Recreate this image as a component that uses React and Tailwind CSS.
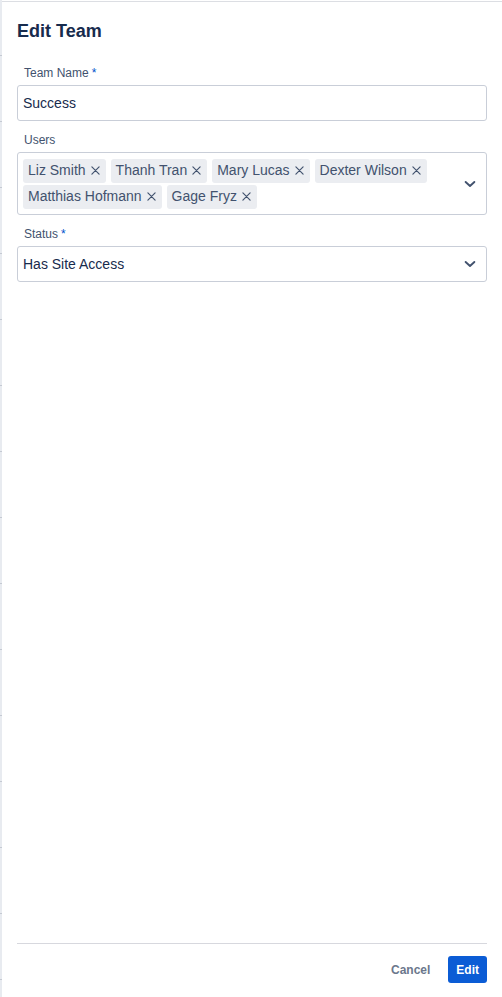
import React from 'react';

const users = ['Liz Smith', 'Thanh Tran', 'Mary Lucas', 'Dexter Wilson', 'Matthias Hofmann', 'Gage Fryz'];

function Chevron() {
  return (
    <svg width="14" height="14" viewBox="0 0 24 24" fill="none" className="shrink-0">
      <path d="M4.5 8.5 12 15.5l7.5-7" stroke="#42526e" strokeWidth="3.2" strokeLinecap="round" strokeLinejoin="round" />
    </svg>
  );
}

function Cross() {
  return (
    <svg width="9" height="9" viewBox="0 0 10 10" fill="none" className="shrink-0">
      <path d="M1 1l8 8M9 1 1 9" stroke="#42526e" strokeWidth="1.3" strokeLinecap="round" />
    </svg>
  );
}

function Label({ children, required }) {
  return (
    <div className="text-[12px] leading-4 text-[#42526e] pl-[7px]">
      {children}
      {required && <span className="text-[#0052cc] ml-[3px]">*</span>}
    </div>
  );
}

export default function App() {
  return (
    <div className="flex w-[502px] h-[997px] bg-white overflow-hidden" style={{ fontFamily: '"Liberation Sans", Arial, sans-serif' }}>
      {/* Strip of the page underneath the drawer */}
      <div className="w-[2px] shrink-0 bg-[#e8ebf0] flex flex-col">
        <div className="h-[55px] shrink-0" />
        {Array.from({ length: 15 }).map((_, i) => (
          <div key={i} className="h-[66px] shrink-0 border-t border-[#c5cad3]" />
        ))}
      </div>

      <div className="flex-1 flex flex-col mt-px border-t border-[#dcdee3]">
        <div className="flex-1 px-[15px]">
          <h2 className="pt-[17px] text-[18px] leading-6 font-bold text-[#172b4d]">Edit Team</h2>

          <div className="mt-[22px]">
            <Label required>Team Name</Label>
            <div className="mt-[4px] h-[36px] border border-[#c9ced8] rounded-[3px] flex items-center px-[5px] text-[14px] text-[#172b4d]">
              Success
            </div>
          </div>

          <div className="mt-[11px]">
            <Label>Users</Label>
            <div className="mt-[4px] h-[63px] border border-[#c9ced8] rounded-[3px] flex items-center pl-[5px] pr-[9px]">
              <div className="flex-1 flex flex-wrap gap-x-[5px] gap-y-[2px] pr-[16px]">
                {users.map((u) => (
                  <div key={u} className="h-[24px] flex items-center gap-[5px] pl-[5px] pr-[6px] rounded-[3px] bg-[#ebedf1] text-[14px] text-[#42526e]">
                    {u}
                    <Cross />
                  </div>
                ))}
              </div>
              <Chevron />
            </div>
          </div>

          <div className="mt-[11px]">
            <Label required>Status</Label>
            <div className="mt-[4px] h-[36px] border border-[#c9ced8] rounded-[3px] flex items-center justify-between pl-[5px] pr-[9px] text-[14px] text-[#172b4d]">
              Has Site Access
              <Chevron />
            </div>
          </div>
        </div>

        <div className="mx-[15px] border-t border-[#d7d8de] pt-[12px] pb-[14px] flex justify-end items-center gap-[8px]">
          <button className="h-[27px] px-[10px] text-[12px] font-bold text-[#6b778c]">Cancel</button>
          <button className="h-[27px] px-[8px] rounded-[3px] bg-[#0b5cd5] text-[12px] font-bold text-white">Edit</button>
        </div>
      </div>
    </div>
  );
}
